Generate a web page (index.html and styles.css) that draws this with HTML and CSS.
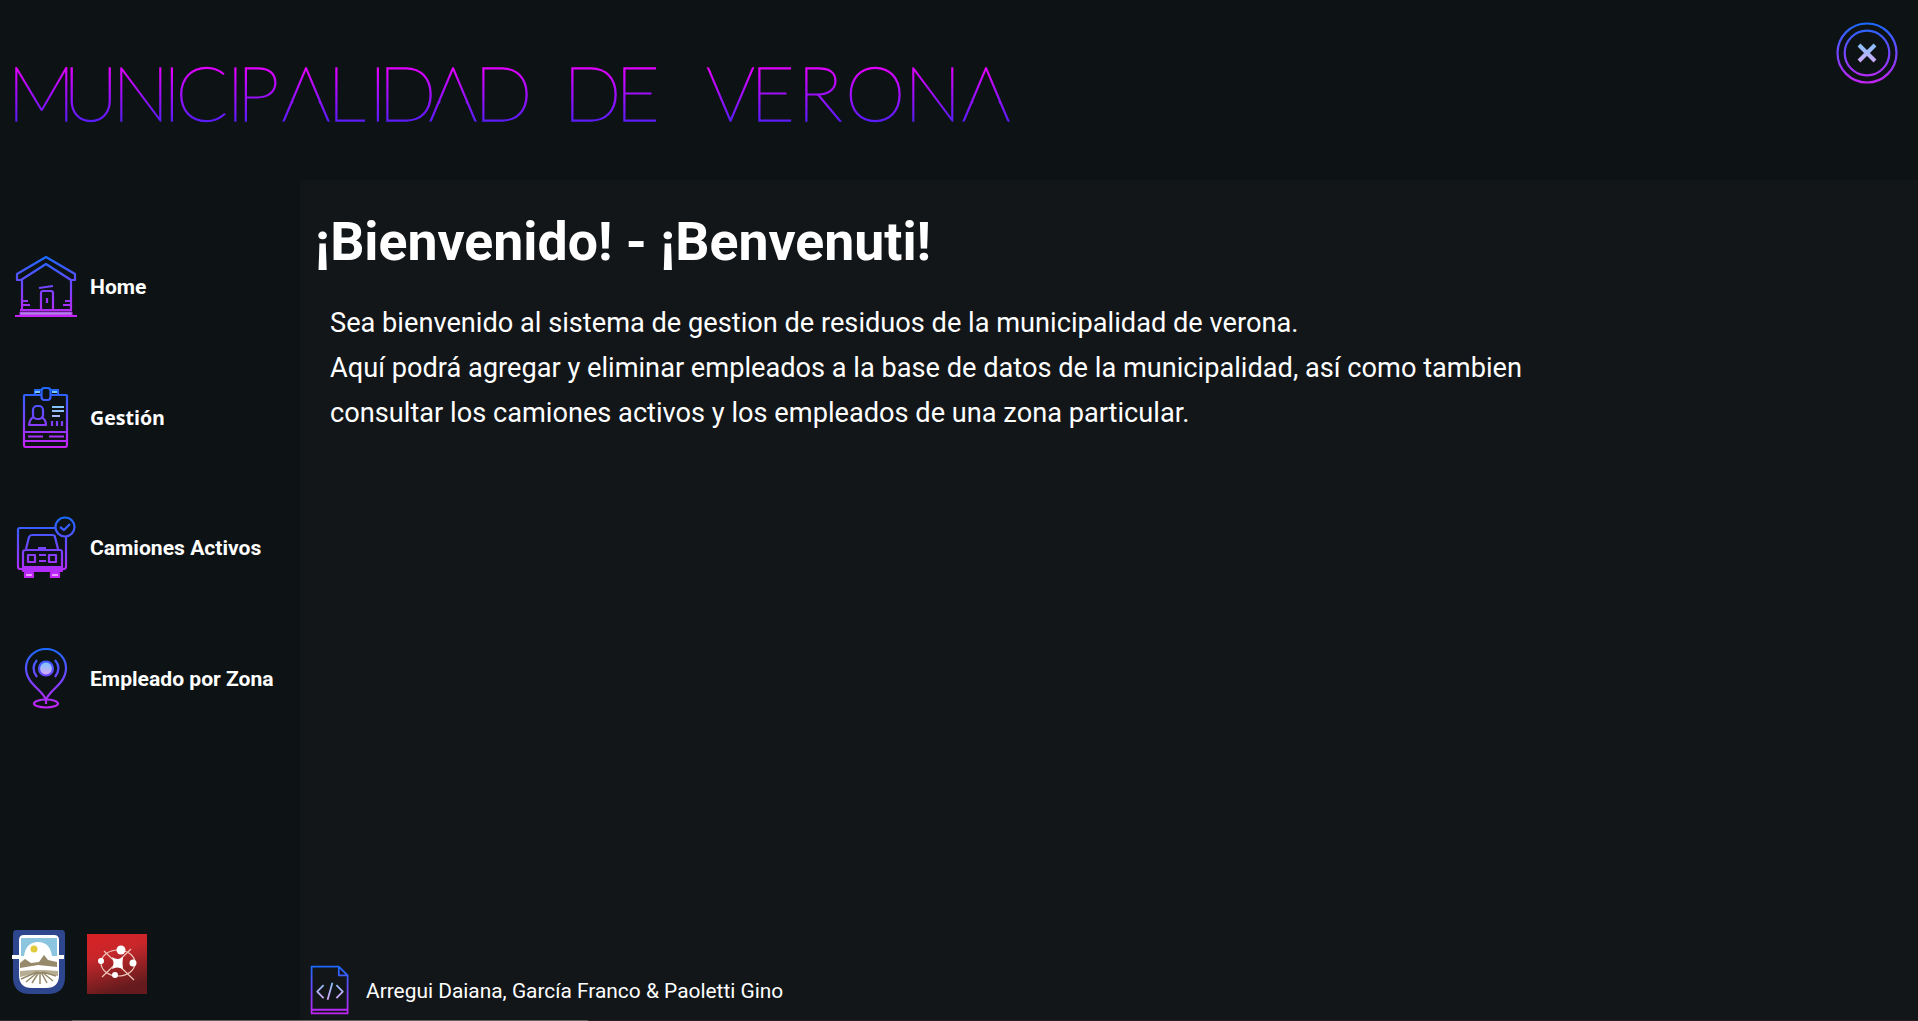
FILE: index.html
```html
<!DOCTYPE html>
<html lang="es">
<head>
<meta charset="utf-8">
<title>Municipalidad de Verona</title>
<link rel="stylesheet" href="styles.css">
</head>
<body>
<svg class="defs" width="0" height="0" aria-hidden="true">
  <defs>
    <linearGradient id="neon" gradientUnits="userSpaceOnUse" x1="0" y1="0" x2="0" y2="62"><stop offset="0" stop-color="#176cff"/><stop offset=".5" stop-color="#7046ff"/><stop offset="1" stop-color="#c822f5"/></linearGradient>
    <linearGradient id="pale" gradientUnits="userSpaceOnUse" x1="0" y1="18" x2="0" y2="44"><stop offset="0" stop-color="#75c7fc"/><stop offset="1" stop-color="#dfa5f8"/></linearGradient>
    <linearGradient id="dot" x1="0" y1="0" x2="0" y2="1"><stop offset="0" stop-color="#75c7fc"/><stop offset="1" stop-color="#dfa5f8"/></linearGradient>
    <linearGradient id="brand" gradientUnits="userSpaceOnUse" x1="0" y1="66" x2="0" y2="121"><stop offset="0" stop-color="#e600ff"/><stop offset="1" stop-color="#5a1cf5"/></linearGradient>
    <mask id="open-a" maskUnits="userSpaceOnUse" x="0" y="0" width="1040" height="180">
      <path fill="#fff" d="M0 0h1040v180H0z"/>
      <path d="M295 98h22l4 10h-30zM442 98h22l4 10h-30zM975 98h22l4 10h-30z"/>
    </mask>
  </defs>
</svg>
<div class="app">
  <header class="header">
    <svg class="brand" width="1040" height="180" mask="url(#open-a)">
      <text y="120.500" x="7 63 112 162.500 175.500 226 236.500 281.500 327 368.500 378 428.500 474">MUNICIPALIDAD</text>
      <text y="120.500" x="563 615">DE</text>
      <text y="120.500" x="706 750 797 845 904 961.500">VERONA</text>
    </svg>
    <button class="close" aria-label="Cerrar">
      <svg class="icon" width="62" height="62" viewBox="0 0 62 62"><circle cx="31" cy="31" r="29.5"/><circle cx="31" cy="31" r="22.3"/><path class="cross" d="M23 23l16 16M39 23L23 39"/></svg>
    </button>
  </header>
  <aside class="sidebar">
    <nav class="nav">
      <a class="nav-item">
        <svg class="icon" width="62" height="62" viewBox="0 0 62 62"><path d="M31 2L2 19v6h4l25-16 25 16h4v-6zM7 24v31M56 24v31M26 55V38q0-2 2-2h8q2 0 2 2v17M32 43v5M24 33l14-2M7 46h6M7 50h8M50 46h6M48 50h8M5 55h52M0 61h62"/><rect class="step" x="5" y="57" width="52" height="3"/></svg>
        <span>Home</span>
      </a>
      <a class="nav-item">
        <svg class="icon" width="62" height="62" viewBox="0 0 62 62"><path d="M27 9H10q-1 0-1 1v49q0 2 2 2h39q2 0 2-2V10q0-1-1-1H36M20 8V4h6M36 4h7v4M9 46h43M9 55h43M13 50.500h15M34 50.500h15"/><rect x="26.500" y="2" width="9" height="12" rx="3"/><rect x="18" y="20" width="10" height="13" rx="4"/><path d="M19 31q-4 1-5 8h17q0-6-5-8M37 35v5M42 35v5M47 35v5"/><path class="light" d="M37 21h12M37 25h12M37 30h8M20 6h5M37 6h5"/></svg>
        <span class="humanist">Gestión</span>
      </a>
      <a class="nav-item">
        <svg class="icon" width="62" height="62" viewBox="0 0 62 62"><circle cx="50" cy="11" r="9.500"/><path d="M45 11l4 3 6-6M40 12H5q-2 0-2 2v37q0 2 3 2h42q3 0 3-2V21M11 33l3-12q1-2 3-2h20q3 0 3 2l3 12M8 36q0-2 3-2h34q2 0 2 2v19H8zM8 51h39M23 32h8M24 39h7M24 45h7"/><rect x="13" y="39" width="7" height="7"/><rect x="34" y="39" width="7" height="7"/><path class="wheel" d="M10 57h8v4h-8zM36 57h8v4h-8z"/></svg>
        <span>Camiones Activos</span>
      </a>
      <a class="nav-item">
        <svg class="icon" width="62" height="62" viewBox="0 0 62 62"><path d="M31 53C28 43 11 37 11 21a20 19 0 0 1 40 0c0 16-17 22-20 32zM22 13q-7 8 0 17M40 13q7 8 0 17M31 51v6"/><ellipse cx="31" cy="56.500" rx="12" ry="4"/><circle class="dot" cx="31" cy="21.500" r="7"/></svg>
        <span>Empleado por Zona</span>
      </a>
    </nav>
    <div class="logos">
      <svg width="54" height="64" viewBox="0 0 54 64"><path fill="#2d468e" d="M4 0h46q3 0 3 4v43q0 17-17 17H18Q1 64 1 47V4q0-4 3-4z"/><path fill="#fff" d="M12 5h30q5 0 5 5v35q0 13-13 13H20Q7 58 7 45V10q0-5 5-5z"/><path fill="#fff" d="M0 25h52v4H0z"/><path fill="#8bc5e0" d="M9 8h36v18h-5q-2-14-14-14t-14 14H9z"/><circle cx="22" cy="19" r="3.500" fill="#e2cb3a"/><path fill="#968a6b" d="M8 33l5-4 6 4 8-1 5-7 4 5 9 2v5l-19-2-18 3z"/><path fill="#b6ad94" d="M8 41q19-2 38 0v5q-19-5-38 1z"/><path stroke="#968a6b" stroke-width="1.500" fill="none" d="M25 42L9 49M26 42l-12 10M27 42l-7 11M28 42v12M29 42l6 11M30 42l11 9M31 42l13 4"/></svg>
      <svg width="60" height="60" viewBox="0 0 60 60"><defs><linearGradient id="red" x1="0" y1="0" x2=".3" y2="1"><stop stop-color="#d92023"/><stop offset=".4" stop-color="#c7272b"/><stop offset="1" stop-color="#651b1d"/></linearGradient></defs><path fill="url(#red)" d="M0 0h60v60H0z"/><g fill="none" stroke="#efc6bb" stroke-width="1.200"><ellipse cx="31" cy="29" rx="17" ry="13"/><path d="M17 17l30 29M44 15L15 43"/></g><g fill="#fff"><path d="M25 23q6 4 11 0-1 6 0 12-6-3-11 0 3-6 0-12z"/><circle cx="34" cy="16" r="4.500"/><circle cx="14" cy="27" r="3"/><circle cx="46" cy="29" r="3.500"/><circle cx="28" cy="41" r="3"/></g></svg>
    </div>
  </aside>
  <main class="content">
    <h1>¡Bienvenido! - ¡Benvenuti!</h1>
    <p class="intro">Sea bienvenido al sistema de gestion de residuos de la municipalidad de verona.<br>Aquí podrá agregar y eliminar empleados a la base de datos de la municipalidad, así como tambien<br>consultar los camiones activos y los empleados de una zona particular.</p>
    <footer class="credits">
      <svg class="icon" width="40" height="50" viewBox="0 0 50 62" preserveAspectRatio="none"><path d="M2 60V2h34l11 11v47H2zM36 2v11h11M2 55.500h45"/><path class="light" d="M17 25l-8 8 8 8M33 25l8 8-8 8M28 22l-6 21"/></svg>
      <span>Arregui Daiana, García Franco &amp; Paoletti Gino</span>
    </footer>
  </main>
  <div class="edge"></div>
</div>
</body>
</html>
```
FILE: styles.css
```css
* { box-sizing: border-box; }
body { margin: 0; background: #0d1214; color: #fff; font-family: Roboto, sans-serif; overflow: hidden; }
.defs { position: absolute; }
.app { display: grid; grid-template: 180px 840px 1px / 300px 1fr; height: 1021px; }
.header { grid-column: 1 / 3; display: flex; justify-content: space-between; align-items: flex-start; }
.brand { font: 100 77px Lato, sans-serif; fill: url(#brand); stroke: url(#brand); stroke-width: 1.3; }
.close { margin: 21.5px 20px 0 0; padding: 0; border: 0; background: none; height: 62px; }
.icon { display: block; flex: none; fill: none; stroke: url(#neon); stroke-width: 2.2; stroke-linejoin: round; }
.cross { stroke: url(#pale); stroke-width: 4; }
.light { stroke: url(#pale); }
.dot { fill: url(#dot); }
.step { fill: #a78bd9; stroke-width: 1; }
.wheel { fill: #e6a0fb; }
.sidebar { display: flex; flex-direction: column; justify-content: space-between; padding: 75px 0 26px 15px; }
.nav { display: flex; flex-direction: column; gap: 68.500px; }
.nav-item { display: flex; align-items: center; gap: 13px; height: 62px; font-size: 21.1px; font-weight: 700; white-space: nowrap; }
.nav-item span { margin-top: 1px; }
.nav-item .humanist { font: 700 19.6px "Open Sans", sans-serif; margin-top: 2px; }
.logos { display: flex; align-items: flex-end; gap: 21px; margin-left: -3px; }
.content { display: flex; flex-direction: column; background: #121619; padding: 29px 0 5px 15px; }
h1 { margin: 0; font-size: 53.6px; line-height: 66px; font-weight: 700; }
.intro { margin: 26px 0 0 15px; font-size: 27.2px; line-height: 45px; white-space: nowrap; }
.credits { display: flex; align-items: center; gap: 16px; margin: auto 0 0 -5px; font-size: 20.9px; }
.credits span { margin-top: 1px; }
.edge { grid-column: 1 / 3; background: linear-gradient(90deg, #2d2d2d 72px, #62625e 72px 588px, #2b2021 588px); }
```
